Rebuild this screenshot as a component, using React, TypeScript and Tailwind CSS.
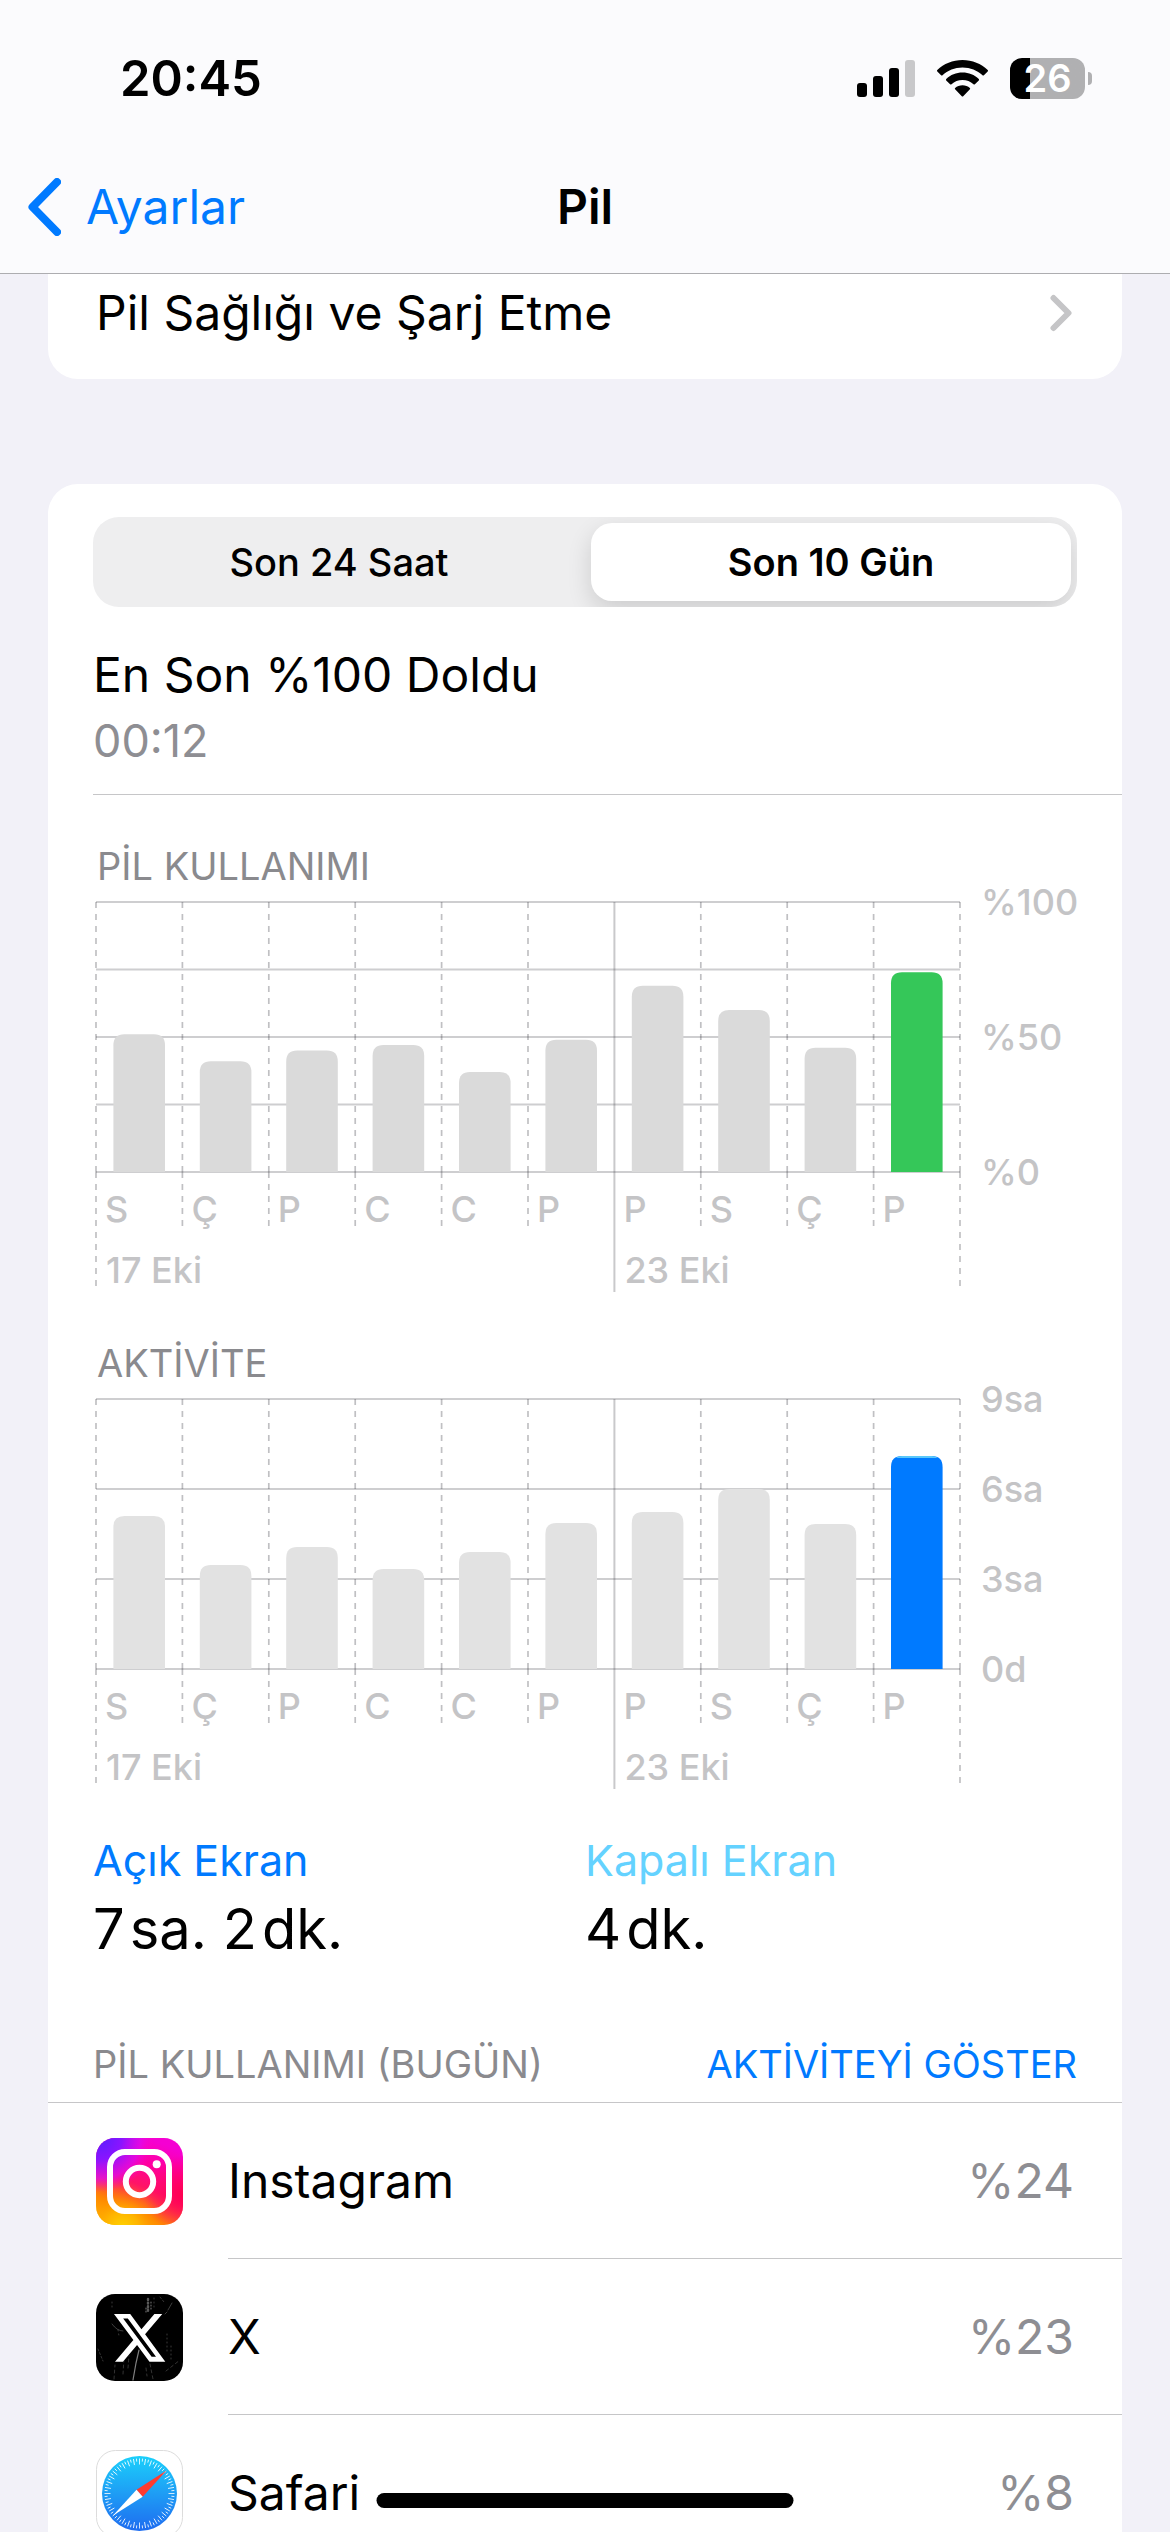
import React, { useState } from "react";

type Chart = {
  title: string;
  values: number[];
  max: number;
  ticks: { value: number; label?: string }[];
  bar: string;
  active: string;
  cap?: string;
};

const DAYS = ["S", "Ç", "P", "C", "C", "P", "P", "S", "Ç", "P"];

const BATTERY: Chart = {
  title: "PİL KULLANIMI",
  values: [51, 41, 45, 47, 37, 49, 69, 60, 46, 74],
  max: 100,
  ticks: [
    { value: 100, label: "%100" },
    { value: 75 },
    { value: 50, label: "%50" },
    { value: 25 },
    { value: 0, label: "%0" },
  ],
  bar: "#dadada",
  active: "#35c759",
};

const ACTIVITY: Chart = {
  title: "AKTİVİTE",
  values: [306, 208, 244, 200, 234, 292, 314, 360, 290, 426],
  max: 540,
  ticks: [
    { value: 540, label: "9sa" },
    { value: 360, label: "6sa" },
    { value: 180, label: "3sa" },
    { value: 0, label: "0d" },
  ],
  bar: "#e2e2e2",
  active: "#007aff",
  cap: "#5ac8fa",
};

function barPath(x: number, y: number, w: number, bottom: number) {
  const r = 11;
  return `M${x} ${bottom}V${y + r}Q${x} ${y} ${x + r} ${y}H${x + w - r}Q${x + w} ${y} ${x + w} ${y + r}V${bottom}Z`;
}

function BarChart({ chart }: { chart: Chart }) {
  const left = 3;
  const top = 12;
  const height = 270;
  const column = 86.4;
  const bottom = top + height;
  const yOf = (v: number) => bottom - (v / chart.max) * height;
  const last = DAYS.length - 1;

  return (
    <section>
      <h2 className="pl-1 text-[38px] leading-[48px] text-[#8a8a8e]">{chart.title}</h2>
      <svg
        viewBox="0 0 984 407"
        className="block w-full overflow-visible text-[36px] font-medium"
        role="img"
        aria-label={chart.title}
      >
        <g stroke="#3c3c43" strokeOpacity="0.25" strokeWidth="2">
          {chart.ticks.map((t) => (
            <line key={t.value} x1={left} x2={left + 10 * column} y1={yOf(t.value)} y2={yOf(t.value)} />
          ))}
          {Array.from({ length: 11 }, (_, i) => {
            const x = left + i * column;
            const solid = i === 6;
            const end = solid ? 402 : i === 0 || i === 10 ? 396 : 336;
            return (
              <path
                key={i}
                d={`M${x} ${top}V${bottom}M${x} ${bottom}V${end}`}
                strokeOpacity={solid ? 0.28 : 0.32}
                strokeWidth={solid ? 2 : 1.7}
                strokeDasharray={solid ? undefined : "6 6"}
              />
            );
          })}
        </g>
        {chart.values.map((v, i) => {
          const x = left + i * column + 17.4;
          const y = yOf(v);
          return (
            <g key={i}>
              <path d={barPath(x, y, 51.6, bottom)} fill={i === last ? chart.active : chart.bar} />
              {i === last && chart.cap && (
                <path d={`M${x + 5} ${y + 2}Q${x + 7} ${y} ${x + 11} ${y}H${x + 40.6}Q${x + 44.6} ${y} ${x + 46.6} ${y + 2}Z`} fill={chart.cap} />
              )}
            </g>
          );
        })}
        <g fill="#c4c4c6">
          {DAYS.map((d, i) => (
            <text key={i} x={left + i * column + 9} y={332}>
              {d}
            </text>
          ))}
          <text x={left + 10} y={393}>17 Eki</text>
          <text x={left + 6 * column + 10} y={393}>23 Eki</text>
          {chart.ticks.map(
            (t) =>
              t.label && (
                <text key={t.value} x={888} y={yOf(t.value) + 13}>
                  {t.label}
                </text>
              ),
          )}
        </g>
      </svg>
    </section>
  );
}

function InstagramIcon() {
  return (
    <svg viewBox="0 0 87 87" className="size-[87px]" aria-hidden="true">
      <defs>
        <linearGradient id="ig-base" x1="0.2" y1="1" x2="0.6" y2="0">
          <stop offset="0" stopColor="#ffc800" />
          <stop offset="0.22" stopColor="#ff8a00" />
          <stop offset="0.5" stopColor="#ff1466" />
          <stop offset="0.75" stopColor="#ff00a0" />
          <stop offset="1" stopColor="#f500d2" />
        </linearGradient>
        <radialGradient id="ig-violet" cx="0.05" cy="0" r="0.62">
          <stop offset="0" stopColor="#5a1eff" />
          <stop offset="0.4" stopColor="#8a14ff" />
          <stop offset="0.75" stopColor="#dc0af0" stopOpacity="0.75" />
          <stop offset="1" stopColor="#ff00c8" stopOpacity="0" />
        </radialGradient>
        <radialGradient id="ig-yellow" cx="0.3" cy="1.05" r="0.5">
          <stop offset="0" stopColor="#ffd600" />
          <stop offset="0.4" stopColor="#ffb400" />
          <stop offset="1" stopColor="#ff6a00" stopOpacity="0" />
        </radialGradient>
        <radialGradient id="ig-red" cx="1" cy="0.65" r="0.45">
          <stop offset="0" stopColor="#ff0050" />
          <stop offset="1" stopColor="#ff0064" stopOpacity="0" />
        </radialGradient>
      </defs>
      <rect width="87" height="87" rx="19" fill="url(#ig-base)" />
      <rect width="87" height="87" rx="19" fill="url(#ig-red)" />
      <rect width="87" height="87" rx="19" fill="url(#ig-yellow)" />
      <rect width="87" height="87" rx="19" fill="url(#ig-violet)" />
      <g fill="none" stroke="#fff" strokeWidth="6">
        <rect x="14" y="14" width="59" height="59" rx="15" />
        <circle cx="43.5" cy="43.5" r="13.7" />
      </g>
      <circle cx="60.7" cy="26.3" r="4" fill="#fff" />
    </svg>
  );
}

function XIcon() {
  return (
    <svg viewBox="0 0 87 87" className="size-[87px]" aria-hidden="true">
      <rect width="87" height="87" rx="19" fill="#000" />
      <g stroke="#fff" fill="none" strokeLinecap="round">
        <path d="M37 86l3-17 3-13" strokeWidth="1.2" opacity="0.5" />
        <path d="M52 5v14" strokeWidth="2.4" opacity="0.35" strokeDasharray="1 2.6" />
        <path d="M55 8v8M50 14v6" strokeWidth="1.2" opacity="0.4" strokeDasharray="1 2" />
        <path d="M16 30q5 7 11 7M72 16l4-7M69 20l2-2" strokeWidth="0.8" opacity="0.3" />
        <path d="M70 77l14-11M18 85l1-14M27 80l1-16M32 74l1-12M54 70l3 15M50 74l1 8" strokeWidth="0.8" opacity="0.25" strokeDasharray="3 3" />
        <path d="M71 40v20M75 52v14M58 4v9M16 8v7M22 36l1 6" strokeWidth="0.9" opacity="0.25" strokeDasharray="1 3" />
        <path d="M2 55l5 12M64 3l4 5" strokeWidth="0.7" opacity="0.3" strokeDasharray="2 2" />
      </g>
      <path
        transform="translate(15 14.5) scale(0.1115 0.1145)"
        fill="#fff"
        d="M389.2 48h70.6L305.6 224.2 487 464H345L233.7 318.6 106.5 464H35.8L200.7 275.5 26.8 48H172.4L272.9 180.9 389.2 48zM364.4 421.8h39.1L151.1 88h-42L364.4 421.8z"
      />
    </svg>
  );
}

function SafariIcon() {
  return (
    <svg viewBox="0 0 87 87" className="size-[87px]" aria-hidden="true">
      <defs>
        <linearGradient id="safari-dial" x1="0" y1="0" x2="0" y2="1">
          <stop offset="0" stopColor="#1bd0fb" />
          <stop offset="0.5" stopColor="#1e9df5" />
          <stop offset="1" stopColor="#1e6cf0" />
        </linearGradient>
      </defs>
      <rect x="0.5" y="0.5" width="86" height="86" rx="19" fill="#fff" stroke="#dcdcdc" />
      <circle cx="43.5" cy="43.5" r="37.5" fill="url(#safari-dial)" />
      <g stroke="#fff" strokeWidth="0.8">
        {Array.from({ length: 72 }, (_, i) => (
          <line
            key={i}
            x1="43.5"
            x2="43.5"
            y1="8.5"
            y2={i % 2 ? 11.5 : 14.5}
            transform={`rotate(${i * 5} 43.5 43.5)`}
          />
        ))}
      </g>
      <path d="M70.5 20.5L46.7 46.7L40.5 39.7Z" fill="#ff3b30" />
      <path d="M17 65.5L40.5 39.7L46.7 46.7Z" fill="#fff" />
    </svg>
  );
}

function SignalIcon() {
  return (
    <svg viewBox="0 0 58 37" className="h-[37px] w-[58px]" aria-hidden="true">
      <rect x="0" y="23" width="10" height="14" rx="3" />
      <rect x="16" y="16" width="10" height="21" rx="3" />
      <rect x="32" y="8" width="10" height="29" rx="3" />
      <rect x="48" y="0" width="10" height="37" rx="3" fill="#c8c8ca" />
    </svg>
  );
}

function WifiIcon() {
  return (
    <svg viewBox="0 0 51 37" className="h-[37px] w-[51px]" aria-hidden="true">
      <path d="M25.5 0C35.3 0 44.2 3.8 50.7 10c.4.4.4 1 0 1.4l-3.8 3.8c-.4.4-1 .4-1.4 0C40.3 10.3 33.3 7.4 25.5 7.4S10.7 10.3 5.5 15.2c-.4.4-1 .4-1.4 0L.3 11.4c-.4-.4-.4-1 0-1.4C6.800 3.800 15.700 0 25.500 0z" />
      <path d="M25.5 12.6c6.3 0 12 2.4 16.3 6.4.4.4.4 1 0 1.4l-3.9 3.8c-.4.4-1 .4-1.4 0-2.9-2.6-6.8-4.2-11-4.2s-8.1 1.6-11 4.2c-.4.4-1 .4-1.4 0l-3.900-3.800c-.4-.4-.4-1 0-1.400 4.300-4 10-6.400 16.300-6.400z" />
      <path d="M25.5 25.2c2.8 0 5.4 1 7.4 2.7.4.4.4 1 0 1.4l-6.7 6.9c-.4.4-1 .4-1.4 0l-6.7-6.9c-.4-.4-.4-1 0-1.4 2-1.7 4.6-2.7 7.4-2.7z" />
    </svg>
  );
}

function BatteryBadge() {
  return (
    <div className="flex items-center gap-[3px]">
      <div className="flex h-[41px] w-[75px] items-center justify-center rounded-[12px] bg-linear-to-r from-black from-27% to-[#b0b0b2] to-27% text-[38px] leading-none font-semibold text-white">
        26
      </div>
      <div className="h-[13px] w-1 rounded-r-full bg-[#b0b0b2]" />
    </div>
  );
}

const APPS = [
  { name: "Instagram", share: "%24", icon: <InstagramIcon /> },
  { name: "X", share: "%23", icon: <XIcon /> },
  { name: "Safari", share: "%8", icon: <SafariIcon /> },
];

const RANGES = ["Son 24 Saat", "Son 10 Gün"];

export default function App() {
  const [range, setRange] = useState(1);

  return (
    <div className="relative flex h-screen flex-col overflow-hidden bg-[#f2f1f8] font-['Inter',sans-serif] text-black">
      <header className="shrink-0 border-b border-[#adadb0] bg-[#fbfbfd]">
        <div className="flex h-[141px] items-center justify-between pt-[15px] pr-[78px] pl-[120px]">
          <span className="text-[49px] leading-none font-semibold">20:45</span>
          <div className="flex items-center gap-[22px]">
            <SignalIcon />
            <WifiIcon />
            <BatteryBadge />
          </div>
        </div>
        <nav className="grid h-[132px] grid-cols-3 items-center px-7 text-[48px] leading-none">
          <a href="#ayarlar" className="flex items-center gap-[25px] text-[#007aff]">
            <svg viewBox="0 0 33 58" className="h-[58px] w-[33px]" fill="none" stroke="currentColor" strokeWidth="8" strokeLinecap="round" strokeLinejoin="round" aria-hidden="true">
              <path d="M29 4L4.5 29L29 54" />
            </svg>
            Ayarlar
          </a>
          <h1 className="text-center font-semibold">Pil</h1>
        </nav>
      </header>

      <main className="min-h-0 flex-1 overflow-hidden px-12">
        <a href="#pil-sagligi" className="-mt-[27px] flex h-[132px] items-center justify-between rounded-b-[30px] bg-white pr-[50px] pl-12 text-[48px] leading-none">
          Pil Sağlığı ve Şarj Etme
          <svg viewBox="0 0 22 38" className="h-[38px] w-[22px]" fill="none" stroke="#c5c5c7" strokeWidth="6" strokeLinecap="round" strokeLinejoin="round" aria-hidden="true">
            <path d="M3.5 4L18.5 19L3.5 34" />
          </svg>
        </a>

        <div className="mt-[105px] rounded-t-[30px] bg-white pt-[33px]">
          <div className="px-[45px]">
            <div className="grid h-[90px] grid-cols-2 gap-3 overflow-hidden rounded-[26px] bg-[#eeeeef] p-1.5">
              {RANGES.map((label, i) => (
                <button
                  key={label}
                  type="button"
                  aria-pressed={range === i}
                  onClick={() => setRange(i)}
                  className={
                    range === i
                      ? "rounded-[21px] bg-white text-[38px] leading-none font-semibold shadow-[0_9px_24px_rgba(0,0,0,0.14)]"
                      : "rounded-[21px] text-[38px] leading-none font-medium"
                  }
                >
                  {label}
                </button>
              ))}
            </div>
          </div>

          <div className="mt-[35px] ml-[45px] border-b border-[#c6c6c8] pb-5">
            <p className="text-[48px] leading-[66px]">En Son %100 Doldu</p>
            <p className="text-[45px] leading-[66px] text-[#8e8e93]">00:12</p>
          </div>

          <div className="mt-[47px] flex flex-col gap-[42px] px-[45px]">
            <BarChart chart={BATTERY} />
            <BarChart chart={ACTIVITY} />
          </div>

          <dl className="mt-9 grid grid-cols-2 px-[45px]">
            <div>
              <dt className="text-[43px] leading-[60px] text-[#007aff]">Açık Ekran</dt>
              <dd className="text-[56px] leading-[78px]">7&#8202;sa. 2&#8202;dk.</dd>
            </div>
            <div>
              <dt className="text-[43px] leading-[60px] text-[#64d2ff]">Kapalı Ekran</dt>
              <dd className="text-[56px] leading-[78px]">4&#8202;dk.</dd>
            </div>
          </dl>

          <div className="mt-[72px] flex justify-between border-b border-[#c6c6c8] px-[45px] pb-3.5 text-[38px] leading-[48px]">
            <h2 className="text-[#8a8a8e]">PİL KULLANIMI (BUGÜN)</h2>
            <button type="button" className="text-[#007aff]">
              AKTİVİTEYİ GÖSTER
            </button>
          </div>

          <ul>
            {APPS.map((app) => (
              <li key={app.name} className="flex h-[156px] items-center gap-[45px] pl-12">
                {app.icon}
                <div className="flex h-full flex-1 items-center justify-between border-b border-[#c6c6c8] pr-12 text-[48px] leading-none">
                  <span>{app.name}</span>
                  <span className="text-[#8e8e93]">{app.share}</span>
                </div>
              </li>
            ))}
          </ul>
        </div>
      </main>

      <div className="absolute bottom-6 left-1/2 h-[15px] w-[417px] -translate-x-1/2 rounded-full bg-black" />
    </div>
  );
}
